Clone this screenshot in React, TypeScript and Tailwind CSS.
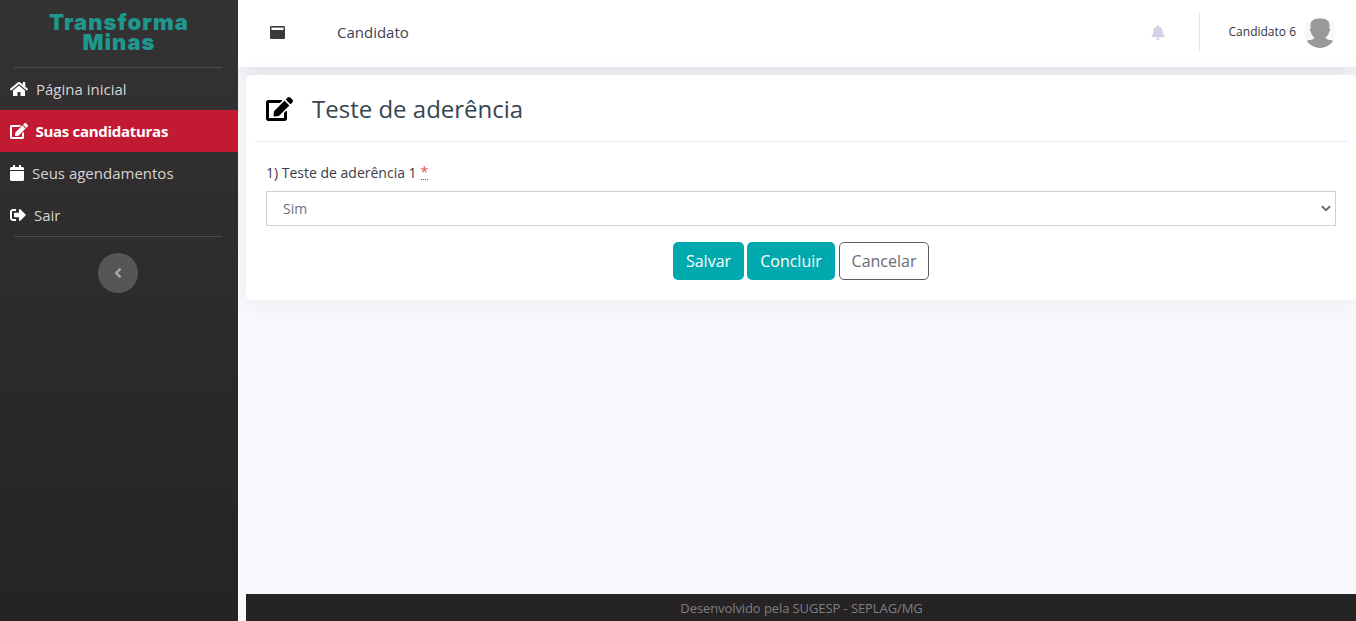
import React from "react";
import { FaHome, FaEdit, FaCalendar, FaSignOutAlt, FaAngleLeft, FaBell } from "react-icons/fa";

function NavItem({ icon, label, active, gap }: { icon: React.ReactNode; label: string; active?: boolean; gap: string }) {
  return (
    <a
      className={`flex h-[42px] items-center pl-[10px] text-[15px] ${gap} ${
        active ? "bg-[#c31a33] font-bold tracking-[-0.29px] text-white" : "text-[#d6d5d5]"
      }`}
    >
      <span className="text-[16px] text-white">{icon}</span>
      <span className="whitespace-nowrap">{label}</span>
    </a>
  );
}

function Avatar() {
  return (
    <svg className="mb-px h-8 w-8" viewBox="0 0 32 32">
      <defs>
        <clipPath id="round">
          <circle cx="16" cy="16" r="16" />
        </clipPath>
      </defs>
      <g clipPath="url(#round)">
        <rect width="32" height="32" fill="#f8f8f8" />
        <path
          fill="#999"
          d="M16 2.500c5.500 0 9.500 2 9.500 6.500v3.500c.9.200.8 2.500-.3 3.200-.6 2.300-1.500 4.100-3.200 5.300v1.800c2.200 1.300 5.200 1.200 7.500 2.200-3 4.500-8 7-13.500 7s-10.500-2.500-13.500-7c2.300-1 5.300-.9 7.500-2.200v-1.800c-1.700-1.200-2.600-3-3.200-5.300-1.100-.7-1.200-3-.3-3.200V9C6.500 4.500 10.500 2.500 16 2.500z"
        />
      </g>
    </svg>
  );
}

export default function App() {
  return (
    <div className="flex h-[621px] w-full overflow-hidden bg-[#f8f9fc] font-['Open_Sans',sans-serif]">
      <aside className="z-10 flex w-[238px] shrink-0 flex-col bg-linear-to-b from-[#343232] to-[#252323]">
        <div className="flex h-[67px] flex-col items-center pt-[12px] text-center font-['Inter',sans-serif] text-[22px] leading-[20px] font-black tracking-[1.05px] text-[#1f978d]">
          <span className="h-5">Transforma</span>
          <span className="h-5">Minas</span>
        </div>
        <hr className="mr-4 ml-[14px] border-[#504e4e]" />
        <nav>
          <NavItem icon={<FaHome className="h-[16px] w-[18px]" />} label="Página inicial" gap="gap-[8px]" />
          <NavItem icon={<FaEdit className="h-[16px] w-[18px]" />} label="Suas candidaturas" gap="gap-[7.5px]" active />
          <NavItem icon={<FaCalendar className="h-[16px] w-[14px]" />} label="Seus agendamentos" gap="gap-[8px]" />
          <NavItem icon={<FaSignOutAlt className="h-[16px] w-[16px]" />} label="Sair" gap="gap-[8px]" />
        </nav>
        <hr className="mr-4 ml-[14px] border-[#4d4b4b]" />
        <button className="mt-4 ml-[98px] flex h-10 w-10 items-center justify-center rounded-full bg-[#575656] pr-px text-[#a9a8a8]">
          <FaAngleLeft className="h-4 w-4" />
        </button>
      </aside>

      <div className="flex min-w-0 flex-1 flex-col">
        <header className="flex h-[67px] shrink-0 items-center bg-white pr-5 pb-[2px] shadow-[0_2.4px_28px_rgba(58,59,69,0.15)]">
          <svg className="ml-8 h-[13px] w-[15px]" viewBox="0 0 15 13">
            <rect width="15" height="13" rx="1" fill="#3a3a3a" />
            <rect x="1" y="1" width="13" height="1" fill="#888" />
            <rect x="1.500" y="2" width="12" height="2" fill="#fff" />
          </svg>
          <span className="ml-[52px] text-[15px] text-[#3f4254]">Candidato</span>
          <FaBell className="mb-px ml-auto h-[15px] w-[14px] text-[#d1d3e2]" />
          <div className="mb-px ml-[34px] h-[38px] w-px bg-[#e3e6f0]" />
          <span className="mr-[8px] ml-[29px] pb-px text-[12px] text-[#33343d]">Candidato 6</span>
          <Avatar />
        </header>

        <main className="flex min-h-0 flex-1 flex-col pt-2 pl-2">
          <section className="h-[225px] rounded-[5px] bg-white px-2 shadow-[0_2.4px_28px_rgba(58,59,69,0.06)]">
            <div className="flex h-[67px] items-center border-b border-[#eaecf0] pt-[2px] pl-3">
              <FaEdit className="h-6 w-[27px] text-black" />
              <h1 className="ml-[19px] pb-px text-[24px] text-[#36454f]">Teste de aderência</h1>
            </div>
            <div className="px-3 pt-[20px]">
              <label className="flex h-[21px] items-center text-[14px] text-[#3a3b45]">
                1) Teste de aderência 1
                <abbr className="ml-1 border-b border-dotted border-[#d9363e] leading-[14px] text-[#e55353] no-underline">*</abbr>
              </label>
              <div className="mt-[8px] flex h-[35px] items-center justify-between border border-[#d1cfdd] pr-[4px] pl-4 text-[14px] text-[#6e707e]">
                <span>Sim</span>
                <svg className="h-[7px] w-[10px]" viewBox="0 0 11 7" fill="none" stroke="#65666f" strokeWidth="2">
                  <path d="M1 1l4.500 4.300L10 1" />
                </svg>
              </div>
              <div className="mt-4 flex justify-center text-[16px]">
                <button className="h-[38px] w-[71px] rounded-[5px] bg-[#00a9ad] text-white">Salvar</button>
                <button className="ml-[3px] h-[38px] w-[88px] rounded-[5px] bg-[#00a9ad] text-white">Concluir</button>
                <button className="ml-1 h-[38px] w-[90px] rounded-[5px] border border-[#5a5c69] text-[#6a6b75]">
                  Cancelar
                </button>
              </div>
            </div>
          </section>
          <footer className="mt-auto flex h-[27px] items-center justify-center bg-[#252323] pt-[2px] pl-px text-[13px] tracking-[-0.09px] text-[#807f80]">
            Desenvolvido pela SUGESP - SEPLAG/MG
          </footer>
        </main>
      </div>
    </div>
  );
}
